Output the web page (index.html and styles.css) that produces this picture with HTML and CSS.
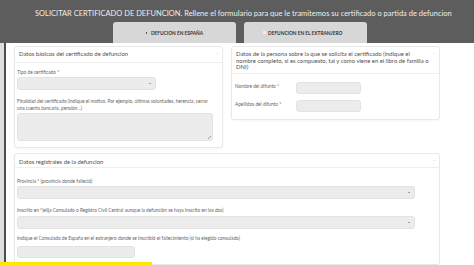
FILE: index.html
```html
<!DOCTYPE html>
<html lang="es">
<head>
  <meta charset="UTF-8" />
  <meta name="viewport" content="width=device-width, initial-scale=1" />
  <title>Solicitar certificado de defunción</title>
  <link rel="stylesheet" href="styles.css">
</head>
<body>

  <header class="top">
    <h1 class="title">SOLICITAR CERTIFICADO DE DEFUNCION. Rellene el formulario para que le tramitemos su certificado o partida de defuncion</h1>
    <nav class="tabs">
      <div class="tab active"><span class="mark"></span>DEFUCION EN ESPAÑA</div>
      <div class="tab"><span class="mark box"></span>DEFUNCION EN EL EXTRANJERO</div>
    </nav>
  </header>

  <main class="content">

    <div class="row">
      <section class="panel panel-basic">
        <div class="panel-header">Datos básicos del certificado de defuncion</div>
        <div class="panel-body basic-body">
          <label class="field-label">Tipo de certificado *</label>
          <div class="select select-short"></div>
          <label class="field-label label-gap">Finalidad del certificado (indique el motivo. Por ejemplo, últimas voluntades, herencia, cerrar una cuenta bancaria, pensión ..)</label>
          <div class="textarea"></div>
        </div>
      </section>

      <section class="panel panel-person">
        <div class="panel-header multi">Datos de la persona sobre la que se solicita el certificado (indique el nombre completo, si es compuesto, tal y como viene en el libro de familia o DNI)</div>
        <div class="panel-body person-body">
          <div class="inline-row">
            <label class="field-label inline-label">Nombre del difunto *</label>
            <div class="input input-small"></div>
          </div>
          <div class="inline-row">
            <label class="field-label inline-label">Apellidos del difunto *</label>
            <div class="input input-small"></div>
          </div>
        </div>
      </section>
    </div>

    <section class="panel panel-registry">
      <div class="panel-header slim">Datos registrales de la defuncion</div>
      <div class="panel-body registry-body">
        <label class="field-label">Provincia * (provincia donde falleció)</label>
        <div class="select select-wide"></div>
        <label class="field-label label-gap">Inscrito en *(elija Consulado o Registro Civil Central aunque la defunción se haya inscrito en los dos)</label>
        <div class="select select-wide"></div>
        <label class="field-label label-gap-sm">Indique el Consulado de España en el extranjero donde se inscribió el fallecimiento (si ha elegido consulado)</label>
        <div class="input input-medium"></div>
      </div>
    </section>

  </main>

  <div class="notice-bar"></div>

</body>
</html>
```

FILE: styles.css
```css
* {
  margin: 0;
  padding: 0;
  box-sizing: border-box;
  font-family: 'Lato', 'Liberation Sans', sans-serif;
}

html, body {
  height: 100%;
  overflow: hidden;
}

body {
  background: #dedede;
  color: #555;
}

/* cabecera gris */
.top {
  background: #5d5d5d;
  height: 43px;
}

.title {
  font-size: 7.5px;
  font-weight: 400;
  line-height: 9px;
  color: #eeeeee;
  padding: 9px 0 0 35px;
  white-space: nowrap;
}

.tabs {
  display: flex;
  gap: 8px;
  margin: 4px 0 0 113px;
}

.tab {
  width: 123px;
  height: 21px;
  background: #d7d7d7;
  border-radius: 3px 3px 0 0;
  display: flex;
  align-items: center;
  justify-content: center;
  font-size: 4.8px;
  font-weight: 700;
  color: #333;
}

.tab:nth-child(2) {
  justify-content: flex-start;
  padding-left: 19px;
}

.mark {
  display: inline-block;
  width: 1px;
  height: 2px;
  background: #555;
  margin-right: 4px;
}

.mark.box {
  width: 3px;
  height: 3px;
  background: #efefef;
  margin-right: 2px;
}

/* contenido */
.content {
  margin-left: 4px;
  border-left: 2px solid #4d4d4d;
  background: #fff;
  height: calc(100% - 43px);
  overflow: hidden;
  padding: 3px 0 0 8px;
}

.row {
  display: flex;
  gap: 8px;
  align-items: flex-start;
}

.panel {
  position: relative;
  background: #fff;
  border: 1px solid #e8e8e8;
  border-radius: 3px;
  box-shadow: 0 1px 2px rgba(0,0,0,0.04);
}

.panel-basic,
.panel-person {
  width: 209px;
}

.panel-registry {
  width: 426px;
  margin-top: 5px;
  height: 112px;
}

.panel-header {
  font-size: 5.9px;
  line-height: 6.5px;
  color: #505050;
  padding: 4px 14px 4px 4px;
  border-bottom: 1px solid #eeeeee;
}

.panel-header::after {
  content: "\02C5";
  position: absolute;
  right: 4px;
  top: 5px;
  font-size: 4px;
  color: #bbb;
}

.panel-header.multi {
  padding: 4px 8px 2px 4px;
}

.panel-header.slim {
  padding: 4.5px 14px 1.5px 4px;
}

.panel-body {
  padding: 6px 2px 6px 2px;
}

.basic-body {
  padding-right: 8px;
}

.field-label {
  display: block;
  font-size: 4.75px;
  line-height: 6.5px;
  color: #666;
}

.label-gap {
  margin-top: 8px;
}

.label-gap-sm {
  margin-top: 6.5px;
}

.select,
.input,
.textarea {
  position: relative;
  background: #ececec;
  border: 1px solid #e2e2e2;
  border-radius: 3px;
  margin-top: 2px;
}

.select {
  height: 13px;
}

.select::after {
  content: "";
  position: absolute;
  right: 4px;
  top: 5px;
  border-left: 1.2px solid transparent;
  border-right: 1.2px solid transparent;
  border-top: 1.8px solid #555;
}

.select-short {
  width: 139px;
}

.select-wide {
  width: 398px;
}

.textarea {
  width: 196px;
  height: 28px;
}

.textarea::after {
  content: "";
  position: absolute;
  right: 1px;
  bottom: 1px;
  width: 3px;
  height: 3px;
  background: linear-gradient(135deg, transparent 45%, #999 45%, #999 60%, transparent 60%);
}

.input {
  height: 12px;
}

.input-small {
  width: 65px;
  margin-top: 0;
}

.input-medium {
  width: 118px;
  margin-top: 4px;
}

.person-body {
  padding: 8px 2px 7px 3px;
  display: flex;
  flex-direction: column;
  gap: 6px;
}

.inline-row {
  display: flex;
  align-items: center;
}

.inline-label {
  width: 61px;
  margin-top: -3px;
}

.registry-body {
  padding-top: 10px;
}

/* barra amarilla inferior */
.notice-bar {
  position: fixed;
  left: 0;
  bottom: 0;
  width: 152px;
  height: 3px;
  background: #ffe600;
}
```
